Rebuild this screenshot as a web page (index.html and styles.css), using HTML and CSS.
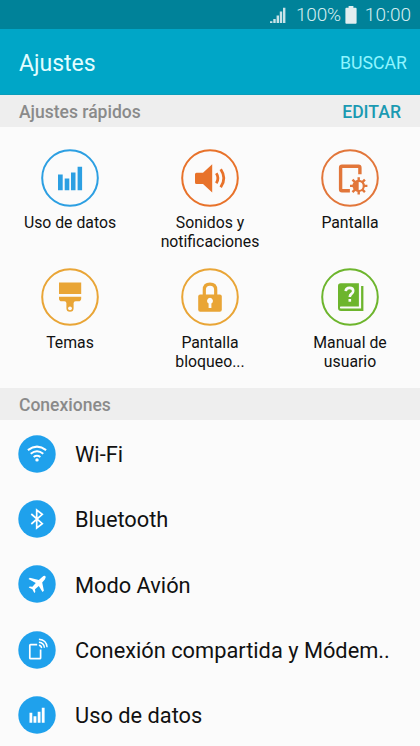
FILE: index.html
```html
<!DOCTYPE html>
<html lang="es">
<head>
  <meta charset="UTF-8">
  <title>Ajustes</title>
  <meta name="viewport" content="width=device-width, initial-scale=1.0">
  <link rel="stylesheet" href="styles.css">
</head>
<body>

  <div class="pantalla">
    <div class="barra-estado">
      <svg class="senal" viewBox="0 0 16 16">
        <path d="M0 16v-1.8h2.4V16zM3.3 16v-4h2.4v4zM6.6 16V8.4H9V16zM9.8 16V4.6h2.4V16zM13 16V.8h2.4V16z"/>
      </svg>
      <span class="porcentaje">100%</span>
      <svg class="bateria" viewBox="0 0 12 18">
        <path d="M3.6 0h4.8v1.8h2.2q1 0 1 1V17q0 .8-1 .8H1.4q-1 0-1-.8V2.8q0-1 1-1h2.2z"/>
      </svg>
      <span class="hora">10:00</span>
    </div>

    <header class="cabecera">
      <h1>Ajustes</h1>
      <button class="buscar">BUSCAR</button>
    </header>

    <div class="seccion seccion-rapidos">
      <h2>Ajustes rápidos</h2>
      <button class="editar">EDITAR</button>
    </div>

    <div class="rapidos">
      <a class="rapido azul">
        <svg viewBox="0 0 58 58">
          <circle class="aro" cx="29" cy="29" r="27.8"/>
          <path d="M17 25.4h4.7v15.8H17zM23.7 29.4h4.6v11.8h-4.6zM30 23.4h4.5v17.8H30zM36.6 17.7h4.5v23.5h-4.5z"/>
        </svg>
        <span>Uso de datos</span>
      </a>
      <a class="rapido naranja">
        <svg viewBox="0 0 58 58">
          <circle class="aro" cx="29" cy="29" r="27.8"/>
          <path d="M15.5 23.7H22l9.2-8.5v28.3L22 35h-6.5q-1.5 0-1.5-1.5v-8.3q0-1.5 1.5-1.5z"/>
          <path class="trazo fino" d="M35.3 24.2q3.3 5 0 10M39.7 20.2q6.3 9 0 18"/>
        </svg>
        <span>Sonidos y<br>notificaciones</span>
      </a>
      <a class="rapido naranja-oscuro">
        <svg viewBox="0 0 58 58">
          <circle class="aro" cx="29" cy="29" r="27.8"/>
          <path class="trazo" d="M38.9 25.2v-6.5q0-1.5-1.4-1.5H21q-1.4 0-1.4 1.5v21.5q0 1.5 1.4 1.5h7.9"/>
          <path class="rayos" d="M37.7 28.2v17.4M29 36.9h17.4M31.5 30.7l12.4 12.4M31.5 43.1l12.4-12.4"/>
          <circle class="sol" cx="37.7" cy="36.9" r="5.1"/>
          <path d="M37.7 31.6a5.3 5.3 0 0 0 0 10.6z"/>
        </svg>
        <span>Pantalla</span>
      </a>
      <a class="rapido amarillo">
        <svg viewBox="0 0 58 58">
          <circle class="aro" cx="29" cy="29" r="27.8"/>
          <path d="M18 14.5h22.2v11.6H18zM18 28.8h22.2v1.6q0 2.8-2.8 2.8h-2.8q-2 0-2 2v5q0 3.6-3.6 3.6t-3.6-3.6v-5q0-2-2-2h-2.6q-2.8 0-2.8-2.8z"/>
          <circle class="hueco" cx="29" cy="40.3" r="1.9"/>
        </svg>
        <span>Temas</span>
      </a>
      <a class="rapido amarillo">
        <svg viewBox="0 0 58 58">
          <circle class="aro" cx="29" cy="29" r="27.8"/>
          <rect x="17.2" y="26.4" width="23.6" height="17.4" rx="2"/>
          <path class="arco" d="M23.3 27v-5.2q0-5.6 5.7-5.6t5.7 5.6V27"/>
          <path class="hueco" d="M29 29.8a3.1 3.1 0 0 0-1.4 5.8V40h2.8v-4.4a3.1 3.1 0 0 0-1.4-5.8z"/>
        </svg>
        <span>Pantalla<br>bloqueo...</span>
      </a>
      <a class="rapido verde">
        <svg viewBox="0 0 58 58">
          <circle class="aro" cx="29" cy="29" r="27.8"/>
          <path d="M19.8 15.3h18.1v23.3H19.8q-.9 0-.9 1t.9 1h20.3V18h2.3v25H20q-3 0-3-3V18.1q0-2.8 2.8-2.8z"/>
          <path class="pregunta" d="M24.7 23.2q.2-3.3 3.8-3.3 3.7 0 3.7 3 0 1.6-1.8 3-1.6 1.2-1.6 3.2"/>
          <rect class="hueco" x="27.5" y="31" width="2.6" height="2.7"/>
        </svg>
        <span>Manual de<br>usuario</span>
      </a>
    </div>

    <div class="seccion">
      <h2>Conexiones</h2>
    </div>

    <ul class="conexiones">
      <li>
        <svg viewBox="0 0 38 38">
          <circle class="fondo" cx="19" cy="19" r="18.7"/>
          <path class="onda" d="M9.9 15.1q9.1-7 18.2 0M12.7 18.7q6.3-4.8 12.6 0M15.6 22q3.4-2.5 6.8 0"/>
          <circle cx="19" cy="24.9" r="1.7"/>
        </svg>
        <span>Wi-Fi</span>
      </li>
      <li>
        <svg viewBox="0 0 38 38">
          <circle class="fondo" cx="19" cy="19" r="18.7"/>
          <path class="linea" d="M13.3 14l11 9.6-5.6 4.4V10l5.6 4.4-11 9.6"/>
        </svg>
        <span>Bluetooth</span>
      </li>
      <li>
        <svg viewBox="0 0 38 38">
          <circle class="fondo" cx="19" cy="19" r="18.7"/>
          <path d="M27.3 11.1q-1-1-3.1.8l-3.3 3-9.1-2.2-1.3 1.4 7.3 3.9-3.4 3.8-2.7-.4-1 1 3.7 1.9 1.9 3.7 1-1-.3-2.7 3.8-3.4 3.7 6.2 1.4-1.3-1.7-8.4 2.6-3q1.6-2.3.5-3.3z"/>
        </svg>
        <span>Modo Avión</span>
      </li>
      <li>
        <svg viewBox="0 0 38 38">
          <circle class="fondo" cx="19" cy="19" r="18.7"/>
          <path class="linea" d="M19.2 13.6h-6.6q-.8 0-.8.8v12.5q0 .8.8.8h9.2q.8 0 .8-.8v-8.4"/>
          <path class="onda-fina" d="M20.9 14.2q2.5.2 2.7 2.9M20.9 11.2q5 .4 5.5 5.5M20.9 8.2q7.6.6 8.2 8"/>
        </svg>
        <span>Conexión compartida y Módem..</span>
      </li>
      <li>
        <svg viewBox="0 0 38 38">
          <circle class="fondo" cx="19" cy="19" r="18.7"/>
          <path d="M11.5 16.7h2.8v10h-2.8zM15.5 20.2h2.9v6.5h-2.9zM19.7 15.7h2.8v11h-2.8zM23.8 11.7h2.8v15h-2.8z"/>
        </svg>
        <span>Uso de datos</span>
      </li>
    </ul>
  </div>

</body>
</html>
```
FILE: styles.css
```css
* {
  margin: 0;
  padding: 0;
  box-sizing: border-box;
}

html, body {
  height: 100%;
  overflow: hidden;
  font-family: Roboto, sans-serif;
  color: #111;
  background-color: #fbfbfb;
}

svg {
  display: block;
  flex-shrink: 0;
}

button {
  border: none;
  background: none;
  font-family: inherit;
  cursor: pointer;
}

.barra-estado {
  display: flex;
  align-items: center;
  justify-content: flex-end;
  height: 29px;
  padding-right: 9px;
  background-color: #008299;
  color: #d5edf0;
  font-size: 19px;
  font-weight: 300;
  line-height: 31px;
}

.senal {
  width: 16px;
  height: 16px;
  margin-right: 10px;
  fill: #c9e3e8;
}

.bateria {
  width: 12px;
  height: 18px;
  margin: 0 8px 0 4px;
  fill: #e2eef0;
}

.porcentaje {
  letter-spacing: -0.2px;
}

.cabecera {
  display: flex;
  align-items: center;
  justify-content: space-between;
  height: 66px;
  padding: 2px 13px 0 19px;
  background-color: #00a6c7;
  border-bottom: 1px solid #0a9dbb;
}

.cabecera h1 {
  padding-top: 2px;
  color: #e2fdff;
  font-size: 23px;
  font-weight: 400;
}

.buscar {
  color: #8ff5ff;
  font-size: 17.7px;
}

.seccion {
  display: flex;
  align-items: center;
  justify-content: space-between;
  height: 32px;
  padding: 1px 19px 0 19px;
  background-color: #eee;
}

.seccion h2 {
  color: #8a8a8a;
  font-size: 17.5px;
  font-weight: 500;
}

.editar {
  color: #1b9ab2;
  font-size: 17.6px;
  font-weight: 500;
}

.rapidos {
  display: grid;
  grid-template-columns: repeat(3, 140px);
  grid-auto-rows: 119.5px;
  height: 261px;
  padding-top: 21.5px;
}

.rapido {
  display: flex;
  flex-direction: column;
  align-items: center;
  gap: 6.5px;
  text-align: center;
}

.rapido svg {
  width: 58px;
  height: 58px;
  fill: currentColor;
}

.rapido span {
  color: #111;
  font-size: 15.8px;
  line-height: 19px;
}

.rapido .aro {
  fill: none;
  stroke: currentColor;
  stroke-width: 2;
}

.rapido .trazo {
  fill: none;
  stroke: currentColor;
  stroke-width: 3.4;
}

.rapido .fino {
  stroke-width: 2.8;
}

.rapido .rayos {
  stroke: currentColor;
  stroke-width: 2.4;
}

.rapido .sol {
  fill: #fbfbfb;
  stroke: currentColor;
  stroke-width: 2.2;
}

.rapido .arco {
  fill: none;
  stroke: currentColor;
  stroke-width: 3.2;
}

.rapido .hueco {
  fill: #fbfbfb;
}

.rapido .pregunta {
  fill: none;
  stroke: #fbfbfb;
  stroke-width: 2.6;
}

.azul { color: #2c9fe2; }
.naranja { color: #e8722a; }
.naranja-oscuro { color: #e2763a; }
.amarillo { color: #e9a536; }
.verde { color: #6db52d; }

.conexiones {
  list-style: none;
  padding-top: 1px;
}

.conexiones li {
  display: flex;
  align-items: center;
  gap: 19px;
  height: 65.3px;
  padding-left: 18px;
  font-size: 21.8px;
  white-space: nowrap;
}

.conexiones span {
  padding-top: 2px;
}

.conexiones svg {
  width: 38px;
  height: 38px;
  fill: #fff;
}

.conexiones .fondo {
  fill: #1fa1ec;
}

.conexiones .onda,
.conexiones .onda-fina,
.conexiones .linea {
  fill: none;
  stroke: #fff;
  stroke-width: 2;
}

.conexiones .onda-fina {
  stroke-width: 1.4;
}

.conexiones .linea {
  stroke-width: 1.7;
}
```
